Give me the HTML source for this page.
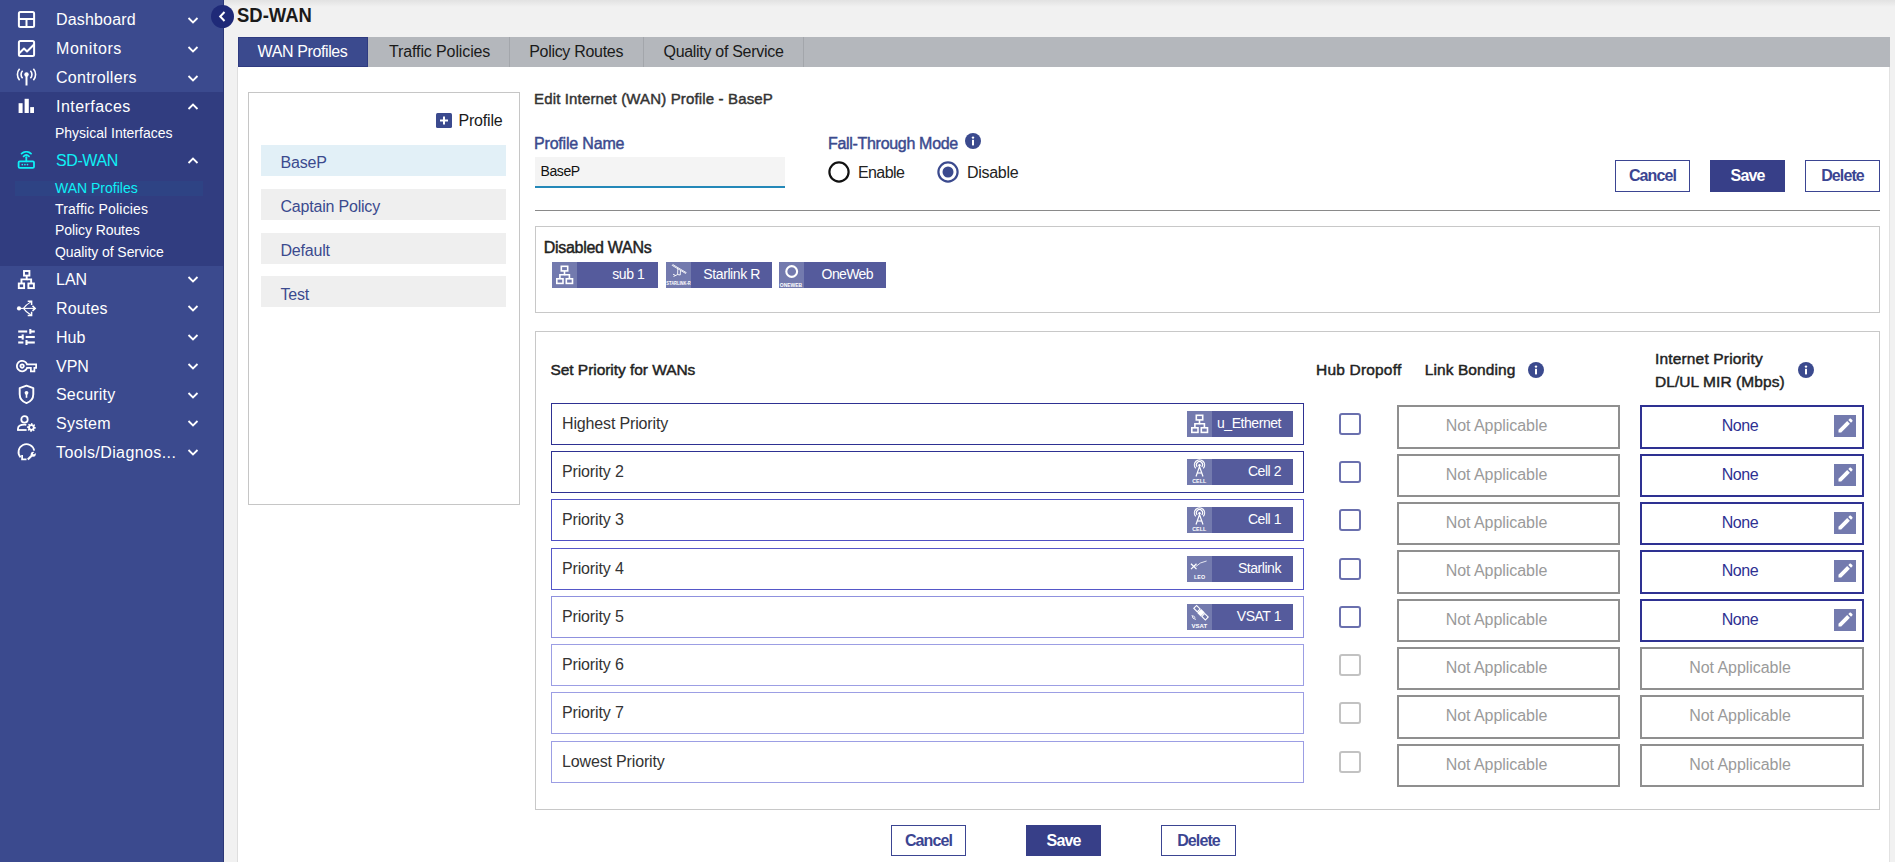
<!DOCTYPE html>
<html><head><meta charset="utf-8"><title>SD-WAN</title>
<style>
html,body{margin:0;padding:0;width:1895px;height:862px;overflow:hidden;background:#f1f1f1;}
body{position:relative;font-family:"Liberation Sans", sans-serif;}
.t{position:absolute;white-space:nowrap;}
.r{position:absolute;}
</style></head><body>
<div class="r" style="left:0px;top:0px;width:224px;height:862px;background:#3b4a8e;"></div>
<div class="r" style="left:0px;top:92px;width:224px;height:174px;background:#313d80;"></div>
<div class="r" style="left:15px;top:181px;width:188px;height:15px;background:#2e4384;"></div>
<div class="r" style="left:223px;top:0px;width:1px;height:862px;background:#2c3777;"></div>
<div class="t" style="left:56px;top:11.96px;font-size:16px;line-height:16px;color:#fff;font-weight:400;letter-spacing:0.17px;">Dashboard</div>
<svg class="r" style="left:187px;top:17.0px" width="12" height="7" viewBox="0 0 12 7"><polyline points="1.5,1 6,5.5 10.5,1" fill="none" stroke="#fff" stroke-width="1.8"/></svg>
<div class="t" style="left:56px;top:40.76px;font-size:16px;line-height:16px;color:#fff;font-weight:400;letter-spacing:0.56px;">Monitors</div>
<svg class="r" style="left:187px;top:45.8px" width="12" height="7" viewBox="0 0 12 7"><polyline points="1.5,1 6,5.5 10.5,1" fill="none" stroke="#fff" stroke-width="1.8"/></svg>
<div class="t" style="left:56px;top:69.56px;font-size:16px;line-height:16px;color:#fff;font-weight:400;letter-spacing:0.32px;">Controllers</div>
<svg class="r" style="left:187px;top:74.6px" width="12" height="7" viewBox="0 0 12 7"><polyline points="1.5,1 6,5.5 10.5,1" fill="none" stroke="#fff" stroke-width="1.8"/></svg>
<div class="t" style="left:56px;top:99.16px;font-size:16px;line-height:16px;color:#fff;font-weight:400;letter-spacing:0.45px;">Interfaces</div>
<svg class="r" style="left:187px;top:103.4px" width="12" height="7" viewBox="0 0 12 7"><polyline points="1.5,6 6,1.5 10.5,6" fill="none" stroke="#fff" stroke-width="1.8"/></svg>
<div class="t" style="left:55px;top:125.95px;font-size:14px;line-height:14px;color:#fff;font-weight:400;">Physical Interfaces</div>
<div class="t" style="left:56px;top:152.86px;font-size:16px;line-height:16px;color:#0ff0f6;font-weight:400;letter-spacing:-0.42px;">SD-WAN</div>
<svg class="r" style="left:187px;top:157.2px" width="12" height="7" viewBox="0 0 12 7"><polyline points="1.5,6 6,1.5 10.5,6" fill="none" stroke="#fff" stroke-width="1.8"/></svg>
<div class="t" style="left:55px;top:180.95px;font-size:14px;line-height:14px;color:#0ff0f6;font-weight:400;">WAN Profiles</div>
<div class="t" style="left:55px;top:201.95px;font-size:14px;line-height:14px;color:#fff;font-weight:400;letter-spacing:0.19px;">Traffic Policies</div>
<div class="t" style="left:55px;top:223.45px;font-size:14px;line-height:14px;color:#fff;font-weight:400;letter-spacing:-0.08px;">Policy Routes</div>
<div class="t" style="left:55px;top:245.45px;font-size:14px;line-height:14px;color:#fff;font-weight:400;letter-spacing:-0.06px;">Quality of Service</div>
<div class="t" style="left:56px;top:272.06px;font-size:16px;line-height:16px;color:#fff;font-weight:400;">LAN</div>
<svg class="r" style="left:187px;top:276.3px" width="12" height="7" viewBox="0 0 12 7"><polyline points="1.5,1 6,5.5 10.5,1" fill="none" stroke="#fff" stroke-width="1.8"/></svg>
<div class="t" style="left:56px;top:301.06px;font-size:16px;line-height:16px;color:#fff;font-weight:400;letter-spacing:0.17px;">Routes</div>
<svg class="r" style="left:187px;top:305.3px" width="12" height="7" viewBox="0 0 12 7"><polyline points="1.5,1 6,5.5 10.5,1" fill="none" stroke="#fff" stroke-width="1.8"/></svg>
<div class="t" style="left:56px;top:330.06px;font-size:16px;line-height:16px;color:#fff;font-weight:400;">Hub</div>
<svg class="r" style="left:187px;top:334.3px" width="12" height="7" viewBox="0 0 12 7"><polyline points="1.5,1 6,5.5 10.5,1" fill="none" stroke="#fff" stroke-width="1.8"/></svg>
<div class="t" style="left:56px;top:358.66px;font-size:16px;line-height:16px;color:#fff;font-weight:400;">VPN</div>
<svg class="r" style="left:187px;top:362.9px" width="12" height="7" viewBox="0 0 12 7"><polyline points="1.5,1 6,5.5 10.5,1" fill="none" stroke="#fff" stroke-width="1.8"/></svg>
<div class="t" style="left:56px;top:387.26px;font-size:16px;line-height:16px;color:#fff;font-weight:400;letter-spacing:0.19px;">Security</div>
<svg class="r" style="left:187px;top:391.5px" width="12" height="7" viewBox="0 0 12 7"><polyline points="1.5,1 6,5.5 10.5,1" fill="none" stroke="#fff" stroke-width="1.8"/></svg>
<div class="t" style="left:56px;top:416.06px;font-size:16px;line-height:16px;color:#fff;font-weight:400;letter-spacing:0.25px;">System</div>
<svg class="r" style="left:187px;top:420.3px" width="12" height="7" viewBox="0 0 12 7"><polyline points="1.5,1 6,5.5 10.5,1" fill="none" stroke="#fff" stroke-width="1.8"/></svg>
<div class="t" style="left:56px;top:444.86px;font-size:16px;line-height:16px;color:#fff;font-weight:400;letter-spacing:0.4px;">Tools/Diagnos...</div>
<svg class="r" style="left:187px;top:449.1px" width="12" height="7" viewBox="0 0 12 7"><polyline points="1.5,1 6,5.5 10.5,1" fill="none" stroke="#fff" stroke-width="1.8"/></svg>
<svg class="r" style="left:17px;top:10px" width="19" height="19" viewBox="0 0 19 19"><rect x="1.9" y="1.9" width="15.2" height="15.2" rx="1.5" fill="none" stroke="#fff" stroke-width="2" stroke-linecap="round" stroke-linejoin="round"/><line x1="1.9" y1="9" x2="17.1" y2="9" fill="none" stroke="#fff" stroke-width="2" stroke-linecap="round" stroke-linejoin="round"/><line x1="9.5" y1="9" x2="9.5" y2="17.1" fill="none" stroke="#fff" stroke-width="2" stroke-linecap="round" stroke-linejoin="round"/></svg>
<svg class="r" style="left:17px;top:39px" width="19" height="19" viewBox="0 0 19 19"><rect x="1.9" y="1.9" width="15.2" height="15.2" rx="1.5" fill="none" stroke="#fff" stroke-width="2" stroke-linecap="round" stroke-linejoin="round"/><polyline points="2.5,14 7,9.5 10,12.5 16.5,6" fill="none" stroke="#fff" stroke-width="2" stroke-linecap="round" stroke-linejoin="round"/></svg>
<svg class="r" style="left:16px;top:68px" width="21" height="18" viewBox="0 0 21 18"><circle cx="10.5" cy="6.5" r="2.2" fill="#fff"/><line x1="10.5" y1="7" x2="10.5" y2="17.5" stroke="#fff" stroke-width="2"/><path d="M6.6,2.8 A5.2,5.2 0 0 0 6.6,10.2" fill="none" stroke="#fff" stroke-width="1.6"/><path d="M14.4,2.8 A5.2,5.2 0 0 1 14.4,10.2" fill="none" stroke="#fff" stroke-width="1.6"/><path d="M3.6,0.8 A8.6,8.6 0 0 0 3.6,12.2" fill="none" stroke="#fff" stroke-width="1.6"/><path d="M17.4,0.8 A8.6,8.6 0 0 1 17.4,12.2" fill="none" stroke="#fff" stroke-width="1.6"/></svg>
<svg class="r" style="left:18px;top:98px" width="17" height="16" viewBox="0 0 17 16"><rect x="0.6" y="5.2" width="4" height="9.8" fill="#fff"/><rect x="6.6" y="0.8" width="4.2" height="14.2" fill="#fff"/><rect x="12.2" y="9.1" width="3.8" height="5.9" fill="#fff"/></svg>
<svg class="r" style="left:17px;top:151px" width="19" height="19" viewBox="0 0 19 19"><rect x="1.6" y="10.3" width="15.4" height="6.6" rx="1.2" fill="none" stroke="#0ff0f6" stroke-width="1.8" stroke-linecap="round"/><line x1="9.3" y1="6.2" x2="9.3" y2="10.3" fill="none" stroke="#0ff0f6" stroke-width="1.8" stroke-linecap="round"/><path d="M6.6,5.3 A4,4 0 0 1 12,5.3" fill="none" stroke="#0ff0f6" stroke-width="1.8" stroke-linecap="round"/><path d="M4.6,2.6 A7.2,7.2 0 0 1 14,2.6" fill="none" stroke="#0ff0f6" stroke-width="1.8" stroke-linecap="round"/><circle cx="5.3" cy="13.6" r="0.85" fill="#0ff0f6"/><circle cx="7.9" cy="13.6" r="0.85" fill="#0ff0f6"/><circle cx="10.5" cy="13.6" r="0.85" fill="#0ff0f6"/></svg>
<svg class="r" style="left:17px;top:269px" width="19" height="21" viewBox="0 0 19 21"><g fill="none" stroke="#fff" stroke-width="1.9"><rect x="7" y="2" width="5.4" height="4.6"/><rect x="1.8" y="14.5" width="5.3" height="4.6"/><rect x="11.4" y="14.5" width="5.5" height="4.6"/><polyline points="9.7,6.6 9.7,10.4 4.45,10.4 4.45,14.5"/><polyline points="9.7,10.4 14.15,10.4 14.15,14.5"/></g></svg>
<svg class="r" style="left:16px;top:299px" width="21" height="19" viewBox="0 0 21 19"><circle cx="3" cy="9.4" r="2.1" fill="#fff"/><g fill="none" stroke="#fff" stroke-width="1.1"><line x1="3" y1="9.4" x2="19" y2="9.4"/><path d="M7.5,9.4 C9,7 12,4.5 15.2,2.6"/><path d="M7.5,9.4 C9,11.8 12,14.3 15.2,16.2"/></g><g fill="none" stroke="#fff" stroke-width="1.5"><polyline points="11.7,2.2 15.6,2.2 15.6,6.1"/><polyline points="11.7,16.6 15.6,16.6 15.6,12.7"/><polyline points="16.5,6.9 19.2,9.4 16.5,11.9"/></g></svg>
<svg class="r" style="left:17px;top:328px" width="19" height="19" viewBox="0 0 19 19"><g stroke="#fff" stroke-width="2.1"><line x1="1.2" y1="3.5" x2="10.2" y2="3.5"/><line x1="13.3" y1="3.5" x2="17.8" y2="3.5"/><line x1="13.3" y1="1" x2="13.3" y2="5.8"/><line x1="1.2" y1="9" x2="5.7" y2="9"/><line x1="5.7" y1="6.4" x2="5.7" y2="11.6"/><line x1="8.7" y1="9" x2="17.8" y2="9"/><line x1="1.2" y1="14.5" x2="6.4" y2="14.5"/><line x1="9.5" y1="12" x2="9.5" y2="17"/><line x1="9.5" y1="14.5" x2="17.8" y2="14.5"/></g></svg>
<svg class="r" style="left:16px;top:355px" width="22" height="18" viewBox="0 0 22 18"><g transform="translate(0,0.6) scale(0.875)"><path fill="#fff" d="M22 19h-6v-4h-2.68c-1.14 2.42-3.6 4-6.32 4-3.86 0-7-3.140-7-7s3.14-7 7-7c2.72 0 5.17 1.58 6.320 4H24v6h-2v4zm-4-2h2v-4h2v-2H11.94l-.23-.67C11.01 8.34 9.11 7 7 7c-2.76 0-5 2.24-5 5s2.24 5 5 5c2.11 0 4.01-1.34 4.71-3.33l.23-.67H18v4zM7 15c-1.65 0-3-1.35-3-3s1.35-3 3-3 3 1.35 3 3-1.35 3-3 3zm0-4c-.55 0-1 .45-1 1s.45 1 1 1 1-.45 1-1-.45-1-1-1z"/></g></svg>
<svg class="r" style="left:18px;top:384px" width="17" height="21" viewBox="0 0 17 21"><path d="M8.5,1.6 L15.3,4.2 L15.3,10.2 C15.3,14.8 12,17.8 8.5,19.1 C5,17.8 1.7,14.8 1.7,10.2 L1.7,4.2 Z" fill="none" stroke="#fff" stroke-width="1.9" stroke-linejoin="round"/><circle cx="8.5" cy="8.8" r="1.9" fill="#fff"/><rect x="7.7" y="9.5" width="1.6" height="4.3" fill="#fff"/></svg>
<svg class="r" style="left:16px;top:414px" width="22" height="19" viewBox="0 0 22 19"><circle cx="8.5" cy="5.4" r="3.2" fill="none" stroke="#fff" stroke-width="1.8"/><path d="M2,16.2 L2,14.6 C2,12 4.8,10.6 8.6,10.6 C9.2,10.6 9.8,10.7 10.3,10.8" fill="none" stroke="#fff" stroke-width="1.8"/><line x1="1.1" y1="16" x2="10.6" y2="16" stroke="#fff" stroke-width="1.8"/><polygon points="15.40,9.00 16.28,9.09 16.66,10.45 17.23,10.76 18.58,10.32 19.14,11.00 18.45,12.24 18.64,12.86 19.90,13.50 19.81,14.38 18.45,14.76 18.14,15.33 18.58,16.68 17.90,17.24 16.66,16.55 16.04,16.74 15.40,18.00 14.52,17.91 14.14,16.55 13.57,16.24 12.22,16.68 11.66,16.00 12.35,14.76 12.16,14.14 10.90,13.50 10.99,12.62 12.35,12.24 12.66,11.67 12.22,10.32 12.90,9.76 14.14,10.45 14.76,10.26" fill="#fff"/><circle cx="15.4" cy="13.5" r="1.4" fill="#3b4a8e"/></svg>
<svg class="r" style="left:16px;top:441px" width="21" height="21" viewBox="0 0 21 21"><path d="M4.6,16.4 A7.9,7.9 0 1 1 18.2,9.6" fill="none" stroke="#fff" stroke-width="1.8"/><polyline points="6.1,14 6.1,18.4 10.5,18.4" fill="none" stroke="#fff" stroke-width="1.8"/><line x1="11.8" y1="18.6" x2="15.8" y2="14.6" stroke="#fff" stroke-width="2.1"/><circle cx="17.2" cy="13.2" r="2.5" fill="#fff"/><line x1="17.4" y1="13" x2="20.2" y2="10.2" stroke="#3b4a8e" stroke-width="1.5"/></svg>
<div class="r" style="left:224px;top:0px;width:1671px;height:862px;background:#f1f1f1;"></div>
<div class="r" style="left:224px;top:0px;width:1671px;height:7px;background:linear-gradient(#e2e2e2,#f1f1f1);"></div>
<div class="r" style="left:237px;top:67px;width:1653px;height:795px;background:#fff;border-left:1px solid #dedede;border-right:1px solid #e2e2e2;box-sizing:border-box;"></div>
<svg class="r" style="left:210px;top:4px" width="25" height="25" viewBox="0 0 25 25"><circle cx="12.5" cy="12.5" r="11.5" fill="#1f2a78"/><polyline points="14.5,8 10.2,12.5 14.5,17" fill="none" stroke="#fff" stroke-width="2"/></svg>
<div class="t" style="left:237.2px;top:4.85px;font-size:20.5px;line-height:20.5px;color:#1a1a1a;font-weight:700;transform:scaleX(0.9);transform-origin:0 0;">SD-WAN</div>
<div class="r" style="left:238px;top:37px;width:1652px;height:30px;background:#b4b7bc;"></div>
<div class="r" style="left:238px;top:37px;width:130px;height:30px;background:#3b4a8e;border:1px solid #2f3b80;box-sizing:border-box;"></div>
<div class="r" style="left:509px;top:37px;width:1px;height:30px;background:#a3a6ab;"></div>
<div class="r" style="left:643px;top:37px;width:1px;height:30px;background:#a3a6ab;"></div>
<div class="r" style="left:803px;top:37px;width:1px;height:30px;background:#a3a6ab;"></div>
<div class="t" style="left:257.5px;top:43.96px;font-size:16px;line-height:16px;color:#fff;font-weight:400;letter-spacing:-0.38px;">WAN Profiles</div>
<div class="t" style="left:389px;top:43.96px;font-size:16px;line-height:16px;color:#1a1a1a;font-weight:400;letter-spacing:-0.12px;">Traffic Policies</div>
<div class="t" style="left:529.2px;top:43.96px;font-size:16px;line-height:16px;color:#1a1a1a;font-weight:400;letter-spacing:-0.3px;">Policy Routes</div>
<div class="t" style="left:663.5px;top:43.96px;font-size:16px;line-height:16px;color:#1a1a1a;font-weight:400;letter-spacing:-0.3px;">Quality of Service</div>
<div class="r" style="left:248px;top:92px;width:272px;height:413px;border:1px solid #c6c6c6;box-sizing:border-box;"></div>
<svg class="r" style="left:436px;top:113px" width="16" height="15" viewBox="0 0 16 15"><rect x="0" y="0" width="16" height="15" rx="1.5" fill="#3b4a8e"/><line x1="8" y1="3.5" x2="8" y2="11.5" stroke="#fff" stroke-width="2"/><line x1="4" y1="7.5" x2="12" y2="7.5" stroke="#fff" stroke-width="2"/></svg>
<div class="t" style="left:458.5px;top:112.96px;font-size:16px;line-height:16px;color:#1a1a1a;font-weight:400;letter-spacing:-0.2px;">Profile</div>
<div class="r" style="left:261px;top:145px;width:245px;height:31px;background:#e2f0f7;"></div>
<div class="t" style="left:280.5px;top:155.36px;font-size:16px;line-height:16px;color:#3b4a8e;font-weight:400;letter-spacing:-0.2px;">BaseP</div>
<div class="r" style="left:261px;top:189px;width:245px;height:31px;background:#efefef;"></div>
<div class="t" style="left:280.5px;top:199.16px;font-size:16px;line-height:16px;color:#3b4a8e;font-weight:400;letter-spacing:-0.2px;">Captain Policy</div>
<div class="r" style="left:261px;top:233px;width:245px;height:31px;background:#efefef;"></div>
<div class="t" style="left:280.5px;top:242.96px;font-size:16px;line-height:16px;color:#3b4a8e;font-weight:400;letter-spacing:-0.2px;">Default</div>
<div class="r" style="left:261px;top:276px;width:245px;height:31px;background:#efefef;"></div>
<div class="t" style="left:280.5px;top:286.76px;font-size:16px;line-height:16px;color:#3b4a8e;font-weight:400;letter-spacing:-0.2px;">Test</div>
<div class="t" style="left:534px;top:90.90px;font-size:15px;line-height:15px;color:#333;font-weight:400;letter-spacing:0.15px;-webkit-text-stroke:0.45px #333;">Edit Internet (WAN) Profile - BaseP</div>
<div class="t" style="left:534px;top:136.46px;font-size:16px;line-height:16px;color:#3b4a8e;font-weight:400;letter-spacing:-0.18px;-webkit-text-stroke:0.45px #3b4a8e;">Profile Name</div>
<div class="r" style="left:535px;top:157px;width:250px;height:31px;background:#f4f4f4;border-bottom:2px solid #2488b8;box-sizing:border-box;"></div>
<div class="t" style="left:540.5px;top:164.35px;font-size:14px;line-height:14px;color:#111;font-weight:400;letter-spacing:-0.4px;">BaseP</div>
<div class="t" style="left:828px;top:136.46px;font-size:16px;line-height:16px;color:#3b4a8e;font-weight:400;letter-spacing:-0.31px;-webkit-text-stroke:0.45px #3b4a8e;">Fall-Through Mode</div>
<svg class="r" style="left:965px;top:133px" width="16" height="16" viewBox="0 0 16 16"><circle cx="8" cy="8" r="8" fill="#3b4a8e"/><rect x="7" y="6.8" width="2" height="5.6" fill="#fff"/><circle cx="8" cy="4.6" r="1.2" fill="#fff"/></svg>
<svg class="r" style="left:828px;top:161px" width="22" height="22" viewBox="0 0 22 22"><circle cx="11" cy="11" r="9.6" fill="none" stroke="#111" stroke-width="2.2"/></svg>
<div class="t" style="left:858px;top:165.26px;font-size:16px;line-height:16px;color:#222;font-weight:400;letter-spacing:-0.6px;">Enable</div>
<svg class="r" style="left:937px;top:161px" width="22" height="22" viewBox="0 0 22 22"><circle cx="11" cy="11" r="9.6" fill="none" stroke="#3b4a8e" stroke-width="2.2"/><circle cx="11" cy="11" r="5.5" fill="#3b4a8e"/></svg>
<div class="t" style="left:967px;top:165.26px;font-size:16px;line-height:16px;color:#222;font-weight:400;letter-spacing:-0.3px;">Disable</div>
<div class="r" style="left:1615px;top:160px;width:75px;height:32px;border:1px solid #3b4592;box-sizing:border-box;background:#fff;"></div>
<div class="t" style="left:1615.0px;top:168.36px;font-size:16px;line-height:16px;color:#3b4592;font-weight:700;letter-spacing:-0.9px;width:75px;text-align:center;">Cancel</div>
<div class="r" style="left:1710px;top:160px;width:75px;height:32px;background:#373f88;"></div>
<div class="t" style="left:1710.0px;top:168.36px;font-size:16px;line-height:16px;color:#fff;font-weight:700;letter-spacing:-0.9px;width:75px;text-align:center;">Save</div>
<div class="r" style="left:1805px;top:160px;width:75px;height:32px;border:1px solid #3b4592;box-sizing:border-box;background:#fff;"></div>
<div class="t" style="left:1805.0px;top:168.36px;font-size:16px;line-height:16px;color:#3b4592;font-weight:700;letter-spacing:-0.9px;width:75px;text-align:center;">Delete</div>
<div class="r" style="left:535px;top:210px;width:1345px;height:1px;background:#8a8a8a;"></div>
<div class="r" style="left:535px;top:226px;width:1345px;height:87px;border:1px solid #c8c8c8;box-sizing:border-box;"></div>
<div class="t" style="left:543.8px;top:239.66px;font-size:16px;line-height:16px;color:#222;font-weight:400;letter-spacing:-0.3px;-webkit-text-stroke:0.45px #222;">Disabled WANs</div>
<div class="r" style="left:552px;top:262px;width:106px;height:26px;background:#555b9c;"></div>
<div class="r" style="left:552px;top:262px;width:25px;height:26px;background:#737aae;"></div>
<svg class="r" style="left:552px;top:262px" width="25" height="26" viewBox="0 0 25 26"><g fill="none" stroke="#fff" stroke-width="1.6"><rect x="9.3" y="4.3" width="6.4" height="4.6"/><rect x="4.8" y="16.8" width="6.2" height="4.6"/><rect x="14.3" y="16.8" width="6.2" height="4.6"/><polyline points="12.5,9 12.5,12.8 7.9,12.8 7.9,16.8"/><polyline points="12.5,12.8 17.4,12.8 17.4,16.8"/></g></svg>
<div class="t" style="left:544.5px;top:266.75px;font-size:14px;line-height:14px;color:#fff;font-weight:400;letter-spacing:-0.4px;width:100px;text-align:right;">sub 1</div>
<div class="r" style="left:666px;top:262px;width:106px;height:26px;background:#555b9c;"></div>
<div class="r" style="left:666px;top:262px;width:25px;height:26px;background:#737aae;"></div>
<svg class="r" style="left:666px;top:262px" width="25" height="26" viewBox="0 0 25 26"><g fill="none" stroke="#fff" stroke-width="0.9"><path d="M6.8,2.6 L20.2,10.6 L19.6,11.4 L6.2,3.4 Z"/><polyline points="11.8,6.5 11.6,12.5 7.5,14.5"/><polyline points="14.5,8.5 14.2,13 11.6,12.5"/><line x1="7" y1="12.2" x2="9.5" y2="13.4"/></g><text x="0.3" y="23.4" font-family="Liberation Sans" font-size="5.6" font-weight="700" fill="#fff" textLength="24.4" lengthAdjust="spacingAndGlyphs">STARLINK-R</text></svg>
<div class="t" style="left:660px;top:266.75px;font-size:14px;line-height:14px;color:#fff;font-weight:400;letter-spacing:-0.4px;width:100px;text-align:right;">Starlink R</div>
<div class="r" style="left:779px;top:262px;width:107px;height:26px;background:#555b9c;"></div>
<div class="r" style="left:779px;top:262px;width:25px;height:26px;background:#737aae;"></div>
<svg class="r" style="left:779px;top:262px" width="25" height="26" viewBox="0 0 25 26"><circle cx="12.7" cy="9.5" r="5.4" fill="none" stroke="#fff" stroke-width="2.1"/><text x="0.8" y="24.6" font-family="Liberation Sans" font-size="5.8" font-weight="700" fill="#fff" textLength="22.4" lengthAdjust="spacingAndGlyphs">ONEWEB</text></svg>
<div class="t" style="left:773px;top:266.75px;font-size:14px;line-height:14px;color:#fff;font-weight:400;letter-spacing:-0.6px;width:100px;text-align:right;">OneWeb</div>
<div class="r" style="left:535px;top:331px;width:1345px;height:479px;border:1px solid #c8c8c8;box-sizing:border-box;"></div>
<div class="t" style="left:550.5px;top:361.78px;font-size:15.5px;line-height:15.5px;color:#222;font-weight:400;letter-spacing:-0.05px;-webkit-text-stroke:0.45px #222;">Set Priority for WANs</div>
<div class="t" style="left:1316px;top:362.38px;font-size:15.5px;line-height:15.5px;color:#222;font-weight:400;letter-spacing:0.19px;-webkit-text-stroke:0.45px #222;">Hub Dropoff</div>
<div class="t" style="left:1424.8px;top:361.98px;font-size:15.5px;line-height:15.5px;color:#222;font-weight:400;letter-spacing:0.08px;-webkit-text-stroke:0.45px #222;">Link Bonding</div>
<svg class="r" style="left:1528px;top:362px" width="16" height="16" viewBox="0 0 16 16"><circle cx="8" cy="8" r="8" fill="#3b4a8e"/><rect x="7" y="6.8" width="2" height="5.6" fill="#fff"/><circle cx="8" cy="4.6" r="1.2" fill="#fff"/></svg>
<div class="t" style="left:1655px;top:350.68px;font-size:15.5px;line-height:15.5px;color:#222;font-weight:400;letter-spacing:0.16px;-webkit-text-stroke:0.45px #222;">Internet Priority</div>
<div class="t" style="left:1655px;top:373.68px;font-size:15.5px;line-height:15.5px;color:#222;font-weight:400;letter-spacing:0.07px;-webkit-text-stroke:0.45px #222;">DL/UL MIR (Mbps)</div>
<svg class="r" style="left:1798px;top:362px" width="16" height="16" viewBox="0 0 16 16"><circle cx="8" cy="8" r="8" fill="#3b4a8e"/><rect x="7" y="6.8" width="2" height="5.6" fill="#fff"/><circle cx="8" cy="4.6" r="1.2" fill="#fff"/></svg>
<div class="r" style="left:551px;top:403px;width:753px;height:42px;border:1px solid #2e3192;box-sizing:border-box;"></div>
<div class="t" style="left:562px;top:416.46px;font-size:16px;line-height:16px;color:#333;font-weight:400;letter-spacing:-0.15px;">Highest Priority</div>
<div class="r" style="left:1187px;top:411px;width:106px;height:26px;background:#555b9c;"></div>
<div class="r" style="left:1187px;top:411px;width:25px;height:26px;background:#737aae;"></div>
<svg class="r" style="left:1187px;top:411px" width="25" height="26" viewBox="0 0 25 26"><g fill="none" stroke="#fff" stroke-width="1.6"><rect x="9.3" y="4.3" width="6.4" height="4.6"/><rect x="4.8" y="16.8" width="6.2" height="4.6"/><rect x="14.3" y="16.8" width="6.2" height="4.6"/><polyline points="12.5,9 12.5,12.8 7.9,12.8 7.9,16.8"/><polyline points="12.5,12.8 17.4,12.8 17.4,16.8"/></g></svg>
<div class="t" style="left:1181px;top:415.75px;font-size:14px;line-height:14px;color:#fff;font-weight:400;letter-spacing:-0.45px;width:100px;text-align:right;">u_Ethernet</div>
<div class="r" style="left:1339px;top:413px;width:22px;height:22px;border:2.5px solid #6a70ae;border-radius:3px;box-sizing:border-box;"></div>
<div class="r" style="left:1397px;top:405px;width:223px;height:44px;border:2px solid #8f8f8f;box-sizing:border-box;"></div>
<div class="t" style="left:1396.5px;top:418.26px;font-size:16px;line-height:16px;color:#9a9a9a;font-weight:400;letter-spacing:-0.05px;width:200px;text-align:center;">Not Applicable</div>
<div class="r" style="left:1640px;top:405px;width:224px;height:44px;border:2px solid #2e3192;box-sizing:border-box;"></div>
<div class="t" style="left:1690.0px;top:418.26px;font-size:16px;line-height:16px;color:#2e3192;font-weight:400;letter-spacing:-0.4px;width:100px;text-align:center;">None</div>
<svg class="r" style="left:1834px;top:415px" width="22" height="22" viewBox="0 0 22 22"><rect width="22" height="22" fill="#737aae"/><path d="M4.5,17.5 L4.5,14.8 L13.2,6.1 L15.9,8.8 L7.2,17.5 Z" fill="#fff"/><path d="M14.3,5 L15.6,3.7 C16,3.3 16.5,3.3 16.9,3.7 L18.3,5.1 C18.7,5.5 18.7,6 18.3,6.4 L17,7.7 Z" fill="#fff"/></svg>
<div class="r" style="left:551px;top:451px;width:753px;height:42px;border:1px solid #2e3192;box-sizing:border-box;"></div>
<div class="t" style="left:562px;top:464.46px;font-size:16px;line-height:16px;color:#333;font-weight:400;letter-spacing:-0.15px;">Priority 2</div>
<div class="r" style="left:1187px;top:459px;width:106px;height:26px;background:#555b9c;"></div>
<div class="r" style="left:1187px;top:459px;width:25px;height:26px;background:#737aae;"></div>
<svg class="r" style="left:1187px;top:459px" width="25" height="26" viewBox="0 0 25 26"><g fill="none" stroke="#fff" stroke-width="1.2"><polyline points="9,17.5 12.5,7.5 16,17.5"/><line x1="10.3" y1="14" x2="14.7" y2="14"/><path d="M10.2,7.8 A3.1,3.1 0 1 1 14.8,7.8"/><path d="M8.7,9.3 A5.1,5.1 0 1 1 16.3,9.3"/></g><circle cx="12.5" cy="6.3" r="1.2" fill="#fff"/><text x="5.2" y="24" font-family="Liberation Sans" font-size="5" font-weight="700" fill="#fff" textLength="14" lengthAdjust="spacingAndGlyphs">CELL</text></svg>
<div class="t" style="left:1181px;top:463.75px;font-size:14px;line-height:14px;color:#fff;font-weight:400;letter-spacing:-0.45px;width:100px;text-align:right;">Cell 2</div>
<div class="r" style="left:1339px;top:461px;width:22px;height:22px;border:2.5px solid #6a70ae;border-radius:3px;box-sizing:border-box;"></div>
<div class="r" style="left:1397px;top:454px;width:223px;height:43px;border:2px solid #8f8f8f;box-sizing:border-box;"></div>
<div class="t" style="left:1396.5px;top:467.26px;font-size:16px;line-height:16px;color:#9a9a9a;font-weight:400;letter-spacing:-0.05px;width:200px;text-align:center;">Not Applicable</div>
<div class="r" style="left:1640px;top:454px;width:224px;height:43px;border:2px solid #2e3192;box-sizing:border-box;"></div>
<div class="t" style="left:1690.0px;top:467.26px;font-size:16px;line-height:16px;color:#2e3192;font-weight:400;letter-spacing:-0.4px;width:100px;text-align:center;">None</div>
<svg class="r" style="left:1834px;top:464px" width="22" height="22" viewBox="0 0 22 22"><rect width="22" height="22" fill="#737aae"/><path d="M4.5,17.5 L4.5,14.8 L13.2,6.1 L15.9,8.8 L7.2,17.5 Z" fill="#fff"/><path d="M14.3,5 L15.6,3.7 C16,3.3 16.5,3.3 16.9,3.7 L18.3,5.1 C18.7,5.5 18.7,6 18.3,6.4 L17,7.7 Z" fill="#fff"/></svg>
<div class="r" style="left:551px;top:499px;width:753px;height:42px;border:1px solid #4f50c4;box-sizing:border-box;"></div>
<div class="t" style="left:562px;top:512.46px;font-size:16px;line-height:16px;color:#333;font-weight:400;letter-spacing:-0.15px;">Priority 3</div>
<div class="r" style="left:1187px;top:507px;width:106px;height:26px;background:#555b9c;"></div>
<div class="r" style="left:1187px;top:507px;width:25px;height:26px;background:#737aae;"></div>
<svg class="r" style="left:1187px;top:507px" width="25" height="26" viewBox="0 0 25 26"><g fill="none" stroke="#fff" stroke-width="1.2"><polyline points="9,17.5 12.5,7.5 16,17.5"/><line x1="10.3" y1="14" x2="14.7" y2="14"/><path d="M10.2,7.8 A3.1,3.1 0 1 1 14.8,7.8"/><path d="M8.7,9.3 A5.1,5.1 0 1 1 16.3,9.3"/></g><circle cx="12.5" cy="6.3" r="1.2" fill="#fff"/><text x="5.2" y="24" font-family="Liberation Sans" font-size="5" font-weight="700" fill="#fff" textLength="14" lengthAdjust="spacingAndGlyphs">CELL</text></svg>
<div class="t" style="left:1181px;top:511.75px;font-size:14px;line-height:14px;color:#fff;font-weight:400;letter-spacing:-0.45px;width:100px;text-align:right;">Cell 1</div>
<div class="r" style="left:1339px;top:509px;width:22px;height:22px;border:2.5px solid #6a70ae;border-radius:3px;box-sizing:border-box;"></div>
<div class="r" style="left:1397px;top:502px;width:223px;height:43px;border:2px solid #8f8f8f;box-sizing:border-box;"></div>
<div class="t" style="left:1396.5px;top:515.26px;font-size:16px;line-height:16px;color:#9a9a9a;font-weight:400;letter-spacing:-0.05px;width:200px;text-align:center;">Not Applicable</div>
<div class="r" style="left:1640px;top:502px;width:224px;height:43px;border:2px solid #2e3192;box-sizing:border-box;"></div>
<div class="t" style="left:1690.0px;top:515.26px;font-size:16px;line-height:16px;color:#2e3192;font-weight:400;letter-spacing:-0.4px;width:100px;text-align:center;">None</div>
<svg class="r" style="left:1834px;top:512px" width="22" height="22" viewBox="0 0 22 22"><rect width="22" height="22" fill="#737aae"/><path d="M4.5,17.5 L4.5,14.8 L13.2,6.1 L15.9,8.8 L7.2,17.5 Z" fill="#fff"/><path d="M14.3,5 L15.6,3.7 C16,3.3 16.5,3.3 16.9,3.7 L18.3,5.1 C18.7,5.5 18.7,6 18.3,6.4 L17,7.7 Z" fill="#fff"/></svg>
<div class="r" style="left:551px;top:548px;width:753px;height:42px;border:1px solid #5557c8;box-sizing:border-box;"></div>
<div class="t" style="left:562px;top:561.46px;font-size:16px;line-height:16px;color:#333;font-weight:400;letter-spacing:-0.15px;">Priority 4</div>
<div class="r" style="left:1187px;top:556px;width:106px;height:26px;background:#555b9c;"></div>
<div class="r" style="left:1187px;top:556px;width:25px;height:26px;background:#737aae;"></div>
<svg class="r" style="left:1187px;top:556px" width="25" height="26" viewBox="0 0 25 26"><g fill="none" stroke="#fff" stroke-width="1.3"><line x1="4" y1="7.8" x2="9.5" y2="13.1"/><line x1="9.5" y1="7.8" x2="4" y2="13.1"/></g><path d="M8.6,10.7 Q13,6 19.6,5" fill="none" stroke="#fff" stroke-width="0.8"/><text x="7.1" y="22.7" font-family="Liberation Sans" font-size="5.2" font-weight="700" fill="#fff" textLength="11" lengthAdjust="spacingAndGlyphs">LEO</text></svg>
<div class="t" style="left:1181px;top:560.75px;font-size:14px;line-height:14px;color:#fff;font-weight:400;letter-spacing:-0.45px;width:100px;text-align:right;">Starlink</div>
<div class="r" style="left:1339px;top:558px;width:22px;height:22px;border:2.5px solid #6a70ae;border-radius:3px;box-sizing:border-box;"></div>
<div class="r" style="left:1397px;top:550px;width:223px;height:44px;border:2px solid #8f8f8f;box-sizing:border-box;"></div>
<div class="t" style="left:1396.5px;top:563.26px;font-size:16px;line-height:16px;color:#9a9a9a;font-weight:400;letter-spacing:-0.05px;width:200px;text-align:center;">Not Applicable</div>
<div class="r" style="left:1640px;top:550px;width:224px;height:44px;border:2px solid #2e3192;box-sizing:border-box;"></div>
<div class="t" style="left:1690.0px;top:563.26px;font-size:16px;line-height:16px;color:#2e3192;font-weight:400;letter-spacing:-0.4px;width:100px;text-align:center;">None</div>
<svg class="r" style="left:1834px;top:560px" width="22" height="22" viewBox="0 0 22 22"><rect width="22" height="22" fill="#737aae"/><path d="M4.5,17.5 L4.5,14.8 L13.2,6.1 L15.9,8.8 L7.2,17.5 Z" fill="#fff"/><path d="M14.3,5 L15.6,3.7 C16,3.3 16.5,3.3 16.9,3.7 L18.3,5.1 C18.7,5.5 18.7,6 18.3,6.4 L17,7.7 Z" fill="#fff"/></svg>
<div class="r" style="left:551px;top:596px;width:753px;height:42px;border:1px solid #8f91de;box-sizing:border-box;"></div>
<div class="t" style="left:562px;top:609.46px;font-size:16px;line-height:16px;color:#333;font-weight:400;letter-spacing:-0.15px;">Priority 5</div>
<div class="r" style="left:1187px;top:604px;width:106px;height:26px;background:#555b9c;"></div>
<div class="r" style="left:1187px;top:604px;width:25px;height:26px;background:#737aae;"></div>
<svg class="r" style="left:1187px;top:604px" width="25" height="26" viewBox="0 0 25 26"><g transform="rotate(-45 14 8.7)"><rect x="12" y="0.5" width="4" height="5" fill="none" stroke="#fff" stroke-width="1.1"/><rect x="11.2" y="6.2" width="5.6" height="5" fill="#fff"/><rect x="12" y="11.9" width="4" height="5" fill="none" stroke="#fff" stroke-width="1.1"/></g><path d="M5,11 A4.5,4.5 0 0 0 8.8,15.5" fill="none" stroke="#fff" stroke-width="0.9"/><path d="M6.6,11.6 A2.6,2.6 0 0 0 8.4,13.8" fill="none" stroke="#fff" stroke-width="0.9"/><text x="4.5" y="23.8" font-family="Liberation Sans" font-size="5" font-weight="700" fill="#fff" textLength="15.7" lengthAdjust="spacingAndGlyphs">VSAT</text></svg>
<div class="t" style="left:1181px;top:608.75px;font-size:14px;line-height:14px;color:#fff;font-weight:400;letter-spacing:-0.45px;width:100px;text-align:right;">VSAT 1</div>
<div class="r" style="left:1339px;top:606px;width:22px;height:22px;border:2.5px solid #6a70ae;border-radius:3px;box-sizing:border-box;"></div>
<div class="r" style="left:1397px;top:599px;width:223px;height:43px;border:2px solid #8f8f8f;box-sizing:border-box;"></div>
<div class="t" style="left:1396.5px;top:612.26px;font-size:16px;line-height:16px;color:#9a9a9a;font-weight:400;letter-spacing:-0.05px;width:200px;text-align:center;">Not Applicable</div>
<div class="r" style="left:1640px;top:599px;width:224px;height:43px;border:2px solid #2e3192;box-sizing:border-box;"></div>
<div class="t" style="left:1690.0px;top:612.26px;font-size:16px;line-height:16px;color:#2e3192;font-weight:400;letter-spacing:-0.4px;width:100px;text-align:center;">None</div>
<svg class="r" style="left:1834px;top:609px" width="22" height="22" viewBox="0 0 22 22"><rect width="22" height="22" fill="#737aae"/><path d="M4.5,17.5 L4.5,14.8 L13.2,6.1 L15.9,8.8 L7.2,17.5 Z" fill="#fff"/><path d="M14.3,5 L15.6,3.7 C16,3.3 16.5,3.3 16.9,3.7 L18.3,5.1 C18.7,5.5 18.7,6 18.3,6.4 L17,7.7 Z" fill="#fff"/></svg>
<div class="r" style="left:551px;top:644px;width:753px;height:42px;border:1px solid #9c9ee4;box-sizing:border-box;"></div>
<div class="t" style="left:562px;top:657.46px;font-size:16px;line-height:16px;color:#333;font-weight:400;letter-spacing:-0.15px;">Priority 6</div>
<div class="r" style="left:1339px;top:654px;width:22px;height:22px;border:2.5px solid #c2c2c2;border-radius:3px;box-sizing:border-box;"></div>
<div class="r" style="left:1397px;top:647px;width:223px;height:43px;border:2px solid #8f8f8f;box-sizing:border-box;"></div>
<div class="t" style="left:1396.5px;top:660.26px;font-size:16px;line-height:16px;color:#9a9a9a;font-weight:400;letter-spacing:-0.05px;width:200px;text-align:center;">Not Applicable</div>
<div class="r" style="left:1640px;top:647px;width:224px;height:43px;border:2px solid #8f8f8f;box-sizing:border-box;"></div>
<div class="t" style="left:1640.0px;top:660.26px;font-size:16px;line-height:16px;color:#9a9a9a;font-weight:400;letter-spacing:-0.05px;width:200px;text-align:center;">Not Applicable</div>
<div class="r" style="left:551px;top:692px;width:753px;height:42px;border:1px solid #9c9ee4;box-sizing:border-box;"></div>
<div class="t" style="left:562px;top:705.46px;font-size:16px;line-height:16px;color:#333;font-weight:400;letter-spacing:-0.15px;">Priority 7</div>
<div class="r" style="left:1339px;top:702px;width:22px;height:22px;border:2.5px solid #c2c2c2;border-radius:3px;box-sizing:border-box;"></div>
<div class="r" style="left:1397px;top:695px;width:223px;height:44px;border:2px solid #8f8f8f;box-sizing:border-box;"></div>
<div class="t" style="left:1396.5px;top:708.26px;font-size:16px;line-height:16px;color:#9a9a9a;font-weight:400;letter-spacing:-0.05px;width:200px;text-align:center;">Not Applicable</div>
<div class="r" style="left:1640px;top:695px;width:224px;height:44px;border:2px solid #8f8f8f;box-sizing:border-box;"></div>
<div class="t" style="left:1640.0px;top:708.26px;font-size:16px;line-height:16px;color:#9a9a9a;font-weight:400;letter-spacing:-0.05px;width:200px;text-align:center;">Not Applicable</div>
<div class="r" style="left:551px;top:741px;width:753px;height:42px;border:1px solid #9c9ee4;box-sizing:border-box;"></div>
<div class="t" style="left:562px;top:754.46px;font-size:16px;line-height:16px;color:#333;font-weight:400;letter-spacing:-0.15px;">Lowest Priority</div>
<div class="r" style="left:1339px;top:751px;width:22px;height:22px;border:2.5px solid #c2c2c2;border-radius:3px;box-sizing:border-box;"></div>
<div class="r" style="left:1397px;top:744px;width:223px;height:43px;border:2px solid #8f8f8f;box-sizing:border-box;"></div>
<div class="t" style="left:1396.5px;top:757.26px;font-size:16px;line-height:16px;color:#9a9a9a;font-weight:400;letter-spacing:-0.05px;width:200px;text-align:center;">Not Applicable</div>
<div class="r" style="left:1640px;top:744px;width:224px;height:43px;border:2px solid #8f8f8f;box-sizing:border-box;"></div>
<div class="t" style="left:1640.0px;top:757.26px;font-size:16px;line-height:16px;color:#9a9a9a;font-weight:400;letter-spacing:-0.05px;width:200px;text-align:center;">Not Applicable</div>
<div class="r" style="left:891px;top:825px;width:75px;height:31px;border:1px solid #3b4592;box-sizing:border-box;background:#fff;"></div>
<div class="t" style="left:891.0px;top:832.86px;font-size:16px;line-height:16px;color:#3b4592;font-weight:700;letter-spacing:-0.9px;width:75px;text-align:center;">Cancel</div>
<div class="r" style="left:1026px;top:825px;width:75px;height:31px;background:#373f88;"></div>
<div class="t" style="left:1026.0px;top:832.86px;font-size:16px;line-height:16px;color:#fff;font-weight:700;letter-spacing:-0.9px;width:75px;text-align:center;">Save</div>
<div class="r" style="left:1161px;top:825px;width:75px;height:31px;border:1px solid #3b4592;box-sizing:border-box;background:#fff;"></div>
<div class="t" style="left:1161.0px;top:832.86px;font-size:16px;line-height:16px;color:#3b4592;font-weight:700;letter-spacing:-0.9px;width:75px;text-align:center;">Delete</div>
</body></html>
